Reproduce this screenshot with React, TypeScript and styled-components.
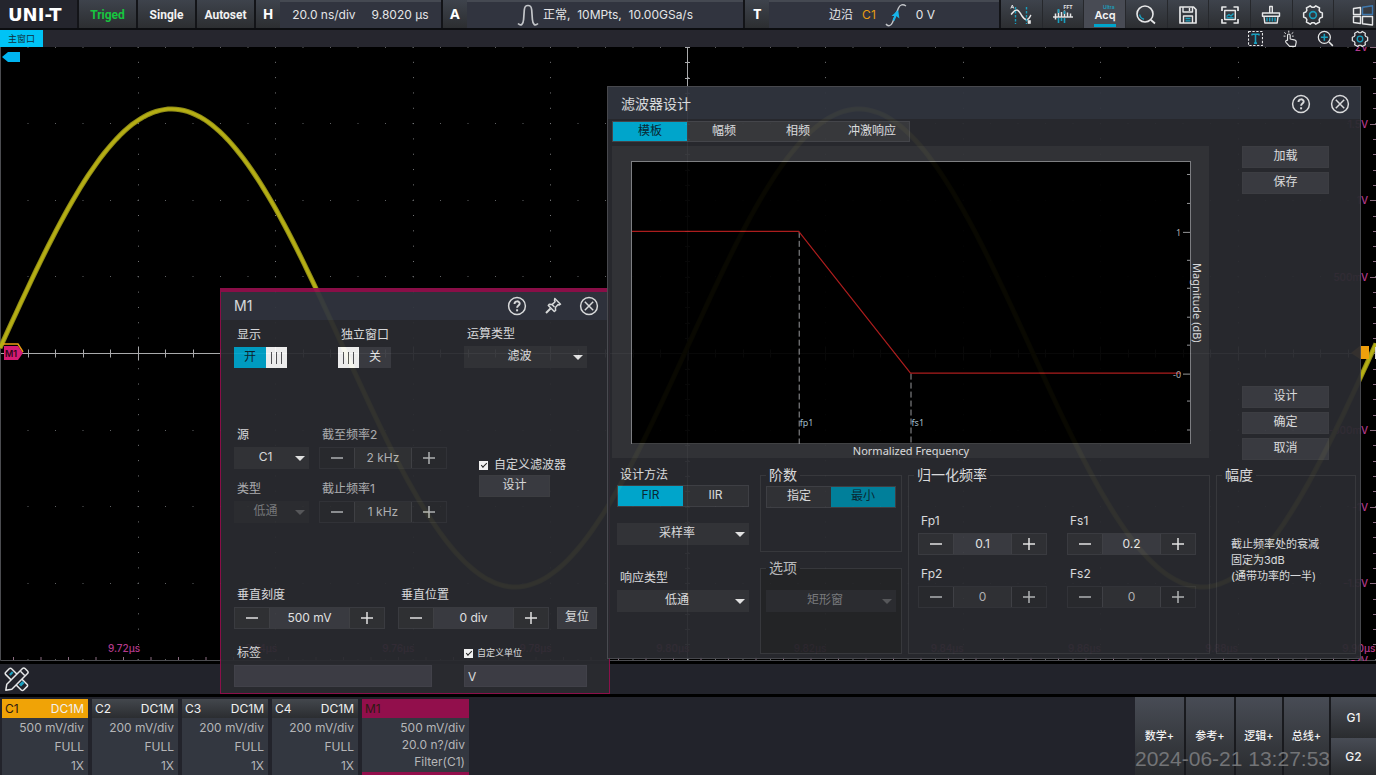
import React, { useId, useState } from "react";
import styled, { createGlobalStyle, css } from "styled-components";

const c = {
  cyan: "#00a5cc",
  cyanBright: "#00c3f5",
  magenta: "#920f4c",
  text: "#e4e5e7",
  panel: "#2a2b30",
  header: "#31353f",
  control: "#35363a",
  field: "#3d3e44",
  strip: "#22232b",
  line: "#3a3b40",
};

const barGradient = "linear-gradient(#3e434c, #2c2e31)";

const GlobalStyle = createGlobalStyle`
  *, *::before, *::after { box-sizing: border-box; }
  body {
    margin: 0;
    background: #000;
    color: ${c.text};
    font: 12px/20px Inter, "Noto Sans CJK SC", sans-serif;
    overflow: hidden;
  }
  button, input, select {
    font: inherit;
    color: inherit;
    margin: 0;
    padding: 0;
    border: 0;
    border-radius: 0;
    background: none;
    min-width: 0;
  }
`;

const Page = styled.div`
  position: relative;
  min-height: 100vh;
  display: grid;
  grid-template-rows: 30px 17px minmax(0, 1fr) 36px 78px;
`;

/* ---------- top bar ---------- */

const TopBar = styled.header`
  display: flex;
  gap: 2px;
  background: #131418;
  border-bottom: 2px solid #0c0d10;
`;

const Logo = styled.div`
  flex: 0 0 77px;
  padding-left: 8px;
  background: #24252d;
  color: #fff;
  font: 700 18px/30px "DejaVu Sans", sans-serif;
`;

const TopButton = styled.button<{ $on?: boolean }>`
  flex: 0 0 57px;
  padding-top: 1px;
  background: ${barGradient};
  color: ${(p) => (p.$on ? "#17c53f" : "#f1f1f1")};
  font-family: Roboto, sans-serif;
  font-weight: 700;
`;

const Group = styled.div<{ $grow: number }>`
  flex: ${(p) => p.$grow} 1 0;
  display: flex;
  min-width: 0;
`;

const GroupKey = styled.button`
  flex: 0 0 24px;
  background: ${barGradient};
  color: #fff;
  font-family: "Noto Sans", sans-serif;
  font-size: 14px;
  font-weight: 700;
`;

const GroupValue = styled.div<{ $end?: boolean }>`
  flex: 1;
  display: flex;
  align-items: center;
  justify-content: ${(p) => (p.$end ? "flex-end" : "center")};
  gap: ${(p) => (p.$end ? "9px" : "4px")};
  padding-right: ${(p) => (p.$end ? "64px" : "0")};
  background: #31343f;
  border-top: 2px solid #454952;
  white-space: nowrap;
`;

const Readout = styled.span`
  margin: 0 6px;
`;

const Orange = styled.span`
  color: #e79c12;
`;

const IconStrip = styled.nav`
  flex: 0 0 375px;
  display: grid;
  grid-template-columns: repeat(9, 1fr);
`;

const IconButton = styled.button<{ $active?: boolean }>`
  display: grid;
  place-items: center;
  padding-top: 1px;
  background: ${(p) => (p.$active ? "#484b54" : barGradient)};
  border-right: 1px solid #26282c;
  &:last-child { padding-left: 16px; }
`;

/* ---------- window bar ---------- */

const WindowBar = styled.div`
  display: flex;
  justify-content: space-between;
  background: #26262e;
`;

const WindowTab = styled.button`
  width: 43px;
  line-height: 16px;
  background: ${c.cyanBright};
  color: #10303c;
  font-size: 9px;
`;

const WindowTools = styled.div`
  display: flex;
  align-items: center;
  gap: 17px;
  padding-right: 7px;
  button { display: grid; width: 18px; height: 17px; place-items: center; }
`;

/* ---------- scope area ---------- */

const Scope = styled.main`
  display: grid;
  overflow: hidden;
  min-height: 0;
  svg { display: block; height: 0; min-height: 100%; }
`;

const ToolStrip = styled.div`
  background: ${c.strip};
  border: solid #000;
  border-width: 3px 0;
  padding: 3px 4px;
  button { display: block; }
`;

/* ---------- bottom bar ---------- */

const BottomBar = styled.footer`
  position: relative;
  display: flex;
  justify-content: space-between;
  background: ${c.strip};
`;

const Channels = styled.div`
  display: flex;
  gap: 4px;
  padding: 2px 2px 0;
`;

const Channel = styled.section<{ $accent?: string }>`
  flex: none;
  width: ${(p) => (p.$accent === c.magenta ? "107px" : "86px")};
  background: #333740;
  ${(p) => p.$accent === c.magenta && css`border-bottom: 3px solid ${c.magenta};`}
`;

const ChannelHead = styled.div<{ $accent?: string }>`
  display: flex;
  justify-content: space-between;
  padding: 0 4px 0 3px;
  height: 19px;
  line-height: 20px;
  background: ${(p) => p.$accent ?? "linear-gradient(#43474d, #2b2d30)"};
  color: #f0f0f0;
  span:first-child { color: ${(p) => (p.$accent ? "#2e1a12" : "#f0f0f0")}; }
`;

const ChannelLine = styled.div<{ $tight?: boolean }>`
  height: ${(p) => (p.$tight ? "17px" : "19px")};
  line-height: 20px;
  padding-right: 4px;
  text-align: right;
  color: #b5b6b8;
`;

const AddButtons = styled.div`
  display: grid;
  grid-template-columns: 49px 48px 46px 45px 45px;
  grid-template-rows: 41px 1fr;
  gap: 0 2px;
  background: #191a1e;
`;

const AddButton = styled.button<{ $tall?: boolean }>`
  grid-row: ${(p) => (p.$tall ? "1 / 3" : "auto")};
  background: linear-gradient(#484c55, #2a2c2f);
  color: #f1f1f1;
  font-size: ${(p) => (p.$tall ? "11px" : "12px")};
  font-weight: 500;
`;

const Stamp = styled.time`
  position: absolute;
  right: 46px;
  bottom: 4px;
  font: 21px/24px "Liberation Sans", sans-serif;
  color: #737477;
  pointer-events: none;
`;

/* ---------- shared dialog parts ---------- */

const Title = styled.h2`
  flex: 1;
  margin: 0;
  font-size: 14px;
  font-weight: 400;
`;

const DialogHead = styled.div<{ $height: number }>`
  display: flex;
  align-items: center;
  height: ${(p) => p.$height}px;
  background: ${c.header};
  button { display: grid; place-items: center; }
`;

const Label = styled.label<{ $dim?: boolean }>`
  padding-left: 3px;
  height: 20px;
  white-space: nowrap;
  opacity: ${(p) => (p.$dim ? 0.75 : 1)};
`;

const Field = styled.div<{ $width?: number }>`
  display: flex;
  flex-direction: column;
  gap: 2px;
  flex: none;
  width: ${(p) => (p.$width ? `${p.$width}px` : "auto")};
`;

const PlainButton = styled.button`
  height: 22px;
  background: ${c.field};
  line-height: 18px;
  padding-bottom: 2px;
  border: 1px solid #404146;
  white-space: nowrap;
`;

const SelectBox = styled.div<{ $dim?: boolean }>`
  position: relative;
  height: 22px;
  background: ${(p) => (p.$dim ? "#2e2f33" : "#35363a")};
  color: ${(p) => (p.$dim ? "#7f8083" : c.text)};
  select {
    appearance: none;
    width: 100%;
    height: 22px;
    padding: 0 24px 2px 12px;
    text-align-last: center;
    opacity: 1;
  }
  &::after {
    content: "";
    position: absolute;
    right: 4px;
    top: 9px;
    border: 5px solid transparent;
    border-top-color: ${(p) => (p.$dim ? "#5b5c5f" : "#eeeeee")};
    border-bottom: 0;
    pointer-events: none;
  }
`;

const StepperBox = styled.div<{ $dim?: boolean }>`
  display: grid;
  grid-template-columns: 34px 1fr 34px;
  height: 22px;
  border: 1px solid ${(p) => (p.$dim ? "#35363b" : "#3e3f44")};
  background: ${(p) => (p.$dim ? "#2b2c30" : "#323337")};
  color: ${(p) => (p.$dim ? "#b9babc" : "#efeff0")};
  button { display: grid; place-items: center; }
  input {
    width: 100%;
    text-align: center;
    background: ${(p) => (p.$dim ? "#323337" : c.field)};
    border: solid #434449;
    border-width: 0 1px;
  }
`;

const SwitchBox = styled.label<{ $on: boolean }>`
  position: relative;
  display: flex;
  flex-direction: ${(p) => (p.$on ? "row" : "row-reverse")};
  width: 53px;
  height: 21px;
  input { position: absolute; inset: 0; opacity: 0; }
`;

const SwitchText = styled.span<{ $on: boolean }>`
  flex: 1;
  text-align: center;
  background: ${(p) => (p.$on ? c.cyan : c.field)};
  color: ${(p) => (p.$on ? "#0c2530" : "#f0f0f0")};
`;

const Knob = styled.span`
  flex: 0 0 21px;
  display: flex;
  justify-content: center;
  align-items: center;
  gap: 4px;
  background: #fbfbfb;
  &::before, &::after, i { content: ""; width: 1px; height: 12px; background: #55565a; }
`;

const Tick = styled.label<{ $small?: boolean }>`
  display: flex;
  align-items: center;
  gap: ${(p) => (p.$small ? "4px" : "6px")};
  height: 20px;
  font-size: ${(p) => (p.$small ? "9px" : "12px")};
  white-space: nowrap;
  input {
    flex: none;
    appearance: none;
    width: 9px;
    height: 9px;
    background: #fff;
    display: grid;
    place-items: center;
  }
  input:checked::before {
    content: "";
    width: 6px;
    height: 3px;
    margin-bottom: 2px;
    border: solid #222;
    border-width: 0 0 1px 1px;
    transform: rotate(-45deg);
  }
`;

const TextInput = styled.input`
  height: 22px;
  background: #3e3e46;
  border: 1px solid #43434b;
  padding: 0 3px;
`;

const Segments = styled.div`
  display: grid;
  grid-auto-flow: column;
  grid-auto-columns: 1fr;
  height: 22px;
  border: 1px solid #424348;
  background: #333438;
`;

const Segment = styled.button<{ $on?: boolean; $muted?: boolean }>`
  line-height: 18px;
  padding-bottom: 2px;
  background: ${(p) => (p.$on ? (p.$muted ? "#0286a3" : "#00aed6") : "transparent")};
  color: ${(p) => (p.$on ? "#0b2a36" : c.text)};
`;

/* ---------- M1 dialog ---------- */

const MathDialog = styled.section`
  position: absolute;
  left: 220px;
  bottom: 81px;
  width: 390px;
  border: 1px solid ${c.magenta};
  border-top-width: 4px;
  background: ${c.panel};
  opacity: 0.94;
`;

const MathHead = styled(DialogHead)`
  gap: 17px;
  padding: 0 10px 0 13px;
`;

const MathBody = styled.div`
  display: flex;
  flex-direction: column;
  padding: 4px 10px 6px 13px;
`;

const Row = styled.div<{ $top?: number; $gap?: number }>`
  display: flex;
  align-items: flex-end;
  gap: ${(p) => p.$gap ?? 10}px;
  margin-top: ${(p) => p.$top ?? 0}px;
`;

const VerticalRow = styled.div`
  display: grid;
  grid-template-columns: 156px 151px 40px;
  gap: 8px;
  align-items: end;
  margin-top: 62px;
`;

const BottomRow = styled.div`
  display: flex;
  justify-content: space-between;
  margin-top: 14px;
  padding-right: 12px;
`;

const FilterRow = styled.div`
  display: flex;
  align-items: center;
  margin-top: 57px;
  gap: 32px;
`;

const CustomFilter = styled.div`
  display: flex;
  flex-direction: column;
  width: 88px;
  padding-top: 4px;
  ${PlainButton} { width: 71px; }
`;

/* ---------- filter design dialog ---------- */

const FilterDialog = styled.section`
  position: absolute;
  right: 15px;
  top: 86px;
  width: 754px;
  border: 1px solid #4b4c52;
  background: ${c.panel};
  opacity: 0.95;
`;

const FilterHead = styled(DialogHead)`
  gap: 19px;
  padding: 2px 10px 0 13px;
`;

const Tabs = styled.div`
  display: grid;
  grid-template-columns: repeat(4, 1fr);
  width: 298px;
  margin: 2px 0 4px 4px;
  height: 21px;
  border: 1px solid #48494e;
  background: #3a3b3f;
  button { line-height: 17px; }
`;

const Upper = styled.div`
  display: flex;
  padding-left: 4px;
`;

const ChartPanel = styled.div`
  flex: 0 0 597px;
  display: grid;
  grid-template-columns: 19px 1fr 18px;
  grid-template-rows: 15px auto 14px;
  background: #343539;
  font-family: "Noto Sans", sans-serif;
  font-size: 11px;
`;

const Chart = styled.svg`
  grid-area: 2 / 2;
  width: 100%;
  display: block;
  background: #000;
`;

const XTitle = styled.div`
  grid-area: 3 / 2;
  line-height: 13px;
  text-align: center;
`;

const YTitle = styled.div`
  grid-area: 2 / 3;
  line-height: 12px;
  writing-mode: vertical-rl;
  text-align: center;
  width: 12px;
`;

const Actions = styled.div`
  flex: none;
  display: flex;
  flex-direction: column;
  gap: 4px;
  width: 87px;
  margin: 0 0 -2px 33px;
  button:nth-child(3) { margin-top: auto; }
`;

const Lower = styled.div`
  display: flex;
  padding: 9px 4px 4px 9px;
  height: 200px;
`;

const Method = styled.div`
  display: flex;
  flex-direction: column;
  width: 132px;
  margin: -2px 11px 0 0;
`;

const MethodSelect = styled.div<{ $top: number }>`
  margin-top: ${(p) => p.$top}px;
`;

const Stack = styled.div`
  display: grid;
  grid-template-rows: 85px 1fr;
  gap: 8px;
  width: 142px;
  margin-right: 6px;
`;

const Frame = styled.fieldset<{ $width?: number; $dim?: boolean }>`
  flex: ${(p) => (p.$width ? "none" : "1")};
  width: ${(p) => (p.$width ? `${p.$width}px` : "auto")};
  min-width: 0;
  margin: 0 6px 0 0;
  padding: 0 5px;
  border: 1px solid ${c.line};
  ${(p) => p.$dim && css`background: #252629; color: #c2c3c5;`}
  ${Stack} > & { margin-right: 0; }
  &:last-child { margin-right: 0; }
`;

const Legend = styled.legend`
  padding: 0 3px;
  font-size: 14px;
  line-height: 16px;
`;

const FrameControl = styled.div<{ $top: number }>`
  margin-top: ${(p) => p.$top}px;
`;

const FreqGrid = styled.div`
  display: grid;
  grid-template-columns: 129px 129px;
  gap: 9px 20px;
  padding: 28px 0 0 4px;
`;

const Note = styled.p`
  margin: 53px 0 0 9px;
  font-size: 11px;
  line-height: 16px;
  white-space: nowrap;
`;

/* ---------- icons ---------- */

const W = "#e6e7e8";
const B = "#1a9fbe";

const Icon = ({ size = 22, children }: { size?: number; children: React.ReactNode }) => (
  <svg width={size} height={size} viewBox="0 0 22 22" fill="none" stroke={W} strokeWidth={1.4} strokeLinejoin="round" aria-hidden="true">
    {children}
  </svg>
);

const gearPath = Array.from({ length: 6 }, (_, i) => i * 60)
  .flatMap((a) => [[a - 23, 7.7], [a - 13, 9.6], [a + 13, 9.6], [a + 23, 7.7]])
  .map(([a, r], i) => {
    const t = (a * Math.PI) / 180;
    return `${i ? "L" : "M"}${(11 + r * Math.cos(t)).toFixed(2)} ${(11 + r * Math.sin(t)).toFixed(2)}`;
  })
  .join(" ") + "Z";

const Gear = ({ size = 22 }: { size?: number }) => (
  <Icon size={size}>
    <path d={gearPath} strokeWidth={1.5} />
    <circle cx="11" cy="11" r="3.4" stroke={B} strokeWidth={1.6} />
  </Icon>
);

const CursorIcon = () => (
  <Icon>
    <path d="M1 10.5C2.5 9.5 4 6 6.5 6S10 9 12 12s3.500 4.500 5.500 3.500S20 12 21 11" strokeWidth={1.5} />
    <path d="M5.500 3v17M16.500 3v17" stroke={B} strokeDasharray="2.500 1.500" />
    <path d="M0.800 4.500L2.300 1l1.500 3.500M1.300 3.300h2" strokeWidth={0.9} />
    <rect x="18" y="16.500" width="2.500" height="3" fill={W} strokeWidth={0.6} />
  </Icon>
);

const FftIcon = () => (
  <Icon>
    <path d="M1 13h20" />
    <path d="M3.500 9.500v6M6.500 5.500v7.500M9.500 8v5M12.500 6.500v6.500M15.500 8.500v4.500M18.500 9.500v3.500" strokeWidth={1.5} />
    <path d="M6.500 14v5M9.500 14v3M12.500 14v5" stroke={B} strokeWidth={1.6} />
    <path d="M6.500 5v4M12.500 7v3" stroke={B} strokeWidth={1.6} />
    <text x="11.500" y="5" fontSize="5" fontWeight="700" fill={W} stroke="none">FFT</text>
  </Icon>
);

const AcqIcon = () => (
  <svg width="24" height="24" viewBox="0 0 24 24" aria-hidden="true">
    <text x="10" y="6" fontSize="5" fontWeight="600" fill={B}>Ultra</text>
    <text x="12" y="16" fontSize="11" fontWeight="600" fill="#f4f4f4" textAnchor="middle">Acq</text>
    <rect x="1" y="21" width="22" height="3" fill={c.cyan} />
  </svg>
);

const SearchIcon = () => (
  <Icon>
    <circle cx="10" cy="10" r="8" strokeWidth={1.6} />
    <path d="M16 16l4 3.500" strokeWidth={1.8} />
    <path d="M4.700 10.500A5.500 5.500 0 0 0 9 15.200" stroke={B} />
  </Icon>
);

const SaveIcon = () => (
  <Icon>
    <path d="M3 3h13.500L19 5.500V19H3z" strokeWidth={1.7} />
    <path d="M6 3v5h9.500V3M12.500 4v3" />
    <path d="M6.500 19v-7h9v7" />
    <path d="M8.500 14.500h5M8.500 16.800h5" stroke={B} strokeWidth={1.3} />
  </Icon>
);

const CaptureIcon = () => (
  <Icon>
    <path d="M3 7V3h4.500M14.500 3H19v4M19 15v4h-4.500M7.500 19H3v-4" strokeWidth={1.7} />
    <rect x="5.700" y="6.500" width="10.600" height="9" />
    <path d="M7.500 12.500l2.500-2 2 1.500 2.500-2.500" stroke={B} />
    <path d="M7.500 13.800h7" stroke={B} />
  </Icon>
);

const CleanIcon = () => (
  <Icon>
    <path d="M9.700 9V2.500h2.600V9" />
    <path d="M2.500 9h17v3.200h-17z" strokeLinejoin="round" />
    <path d="M4 12.500l.8 6.500h12.400l.8-6.500" />
    <path d="M7 13.500v4M9.700 13.500v4M12.400 13.500v4M15.100 13.500v4" stroke={B} />
  </Icon>
);

const WindowsIcon = () => (
  <Icon>
    <path d="M1.500 4.500l7-1v7h-7zM1.500 12.500h7v7l-7-1zM10.500 12.500h10V21l-10-1.300z" />
    <path d="M10.500 3.200l10-1.500v8.800h-10z" stroke="#3f78ad" />
  </Icon>
);

const TextBoxIcon = () => (
  <Icon size={17}>
    <rect x="2" y="2" width="18" height="18" strokeDasharray="3 2" />
    <path d="M6.500 7V5.500h9V7M11 5.500v11M9 17h4" stroke={B} strokeWidth={2} />
  </Icon>
);

const TouchIcon = () => (
  <Icon size={18}>
    <path d="M8 13V6.500a1.600 1.600 0 0 1 3.200 0V11l5 1c2 .5 2.800 1.500 2.300 3.500L17.500 20h-7L6 15c-1-1.500.5-3 2-2" />
    <path d="M9.500 3.200V.8M6 4.500L4 3M13 4.500L15 3M5.500 7.500H3.200M13.500 7.500h2" strokeWidth={1.2} />
  </Icon>
);

const ZoomIcon = () => (
  <Icon size={17}>
    <circle cx="9.500" cy="9.500" r="7.800" strokeWidth={1.6} />
    <path d="M15.500 15.500l5 5" strokeWidth={2} />
    <path d="M9.500 5v9M5 9.500h9" stroke={B} strokeWidth={2} />
  </Icon>
);

const PulseIcon = () => (
  <svg width="22" height="24" viewBox="0 0 22 24" fill="none" stroke="#c3c5c9" strokeWidth="1.700" aria-hidden="true">
    <path d="M1 20.500c3 3 5.200 1 5.600-4L7.300 7c.3-3.500 1-4.500 3.700-4.500s3.400 1 3.700 4.500l.7 9.500c.4 5 2.600 7 5.600 4" />
  </svg>
);

const EdgeIcon = () => (
  <svg width="22" height="24" viewBox="0 0 22 24" fill="none" stroke="#c3c5c9" strokeWidth="1.400" aria-hidden="true">
    <path d="M1 21c2 3 5 2 6.500-1.500L13.500 5c1.500-3.500 4.500-4 7.500-2" />
    <path d="M8.500 17.500L12 9" stroke="#16b4ea" strokeWidth="2" />
    <path d="M6.500 13l6.700-6 1.200 8.500-3.200-2.500z" fill="#16b4ea" stroke="none" />
  </svg>
);

const HelpIcon = () => (
  <svg width="20" height="20" viewBox="0 0 20 20" fill="none" stroke={W} strokeWidth="1.500" aria-hidden="true">
    <circle cx="10" cy="10" r="8.400" />
    <path d="M7.500 8c0-3.600 5.200-3.400 5.200-.4 0 2-2.600 2-2.600 4.200" strokeWidth="1.900" />
    <path d="M10.100 13.300v2" strokeWidth="2" />
  </svg>
);

const CloseIcon = () => (
  <svg width="20" height="20" viewBox="0 0 20 20" fill="none" stroke={W} strokeWidth="1.500" aria-hidden="true">
    <circle cx="10" cy="10" r="8.400" />
    <path d="M5.800 5.800l8.400 8.400M14.200 5.800l-8.400 8.400" />
  </svg>
);

const PinIcon = () => (
  <svg width="18" height="18" viewBox="0 0 18 18" fill="none" stroke={W} strokeWidth="1.500" strokeLinejoin="round" aria-hidden="true">
    <path d="M10.800 1.500l5.700 5.700-1.500.8-.9-.4-2.700 2.900.2 3-1.300 1-6-6 1-1.300 3 .2 2.800-2.700-.6-1.200z" />
    <path d="M6.500 11.500L2 16" strokeWidth="2" />
    <path d="M8 7.500l2.500 2.500" />
  </svg>
);

const DrawIcon = () => (
  <svg width="25" height="25" viewBox="0 0 25 25" fill="none" stroke={W} strokeWidth="1.500" strokeLinejoin="round" aria-hidden="true">
    <path d="M1.800 5.200l3.400-3.400c.8-.8 1.700-.8 2.400 0L23 17.200c.8.8.8 1.600 0 2.400l-3.400 3.400c-.8.8-1.600.8-2.400 0L1.800 7.600c-.8-.8-.8-1.600 0-2.400z" />
    <path d="M5.800 8l3-3" stroke={B} strokeWidth="2.200" />
    <path d="M16 18.500l3.500-3.500" stroke={B} strokeWidth="3" />
    <path d="M1.800 23.200l1-6L18.500 1.500c.8-.8 1.700-.8 2.500 0l2.500 2.500c.8.800.8 1.700 0 2.500L7.800 22.200z" fill={c.strip} />
    <path d="M16.500 4.300l4.200 4.200" />
  </svg>
);

const Minus = () => (
  <svg width="12" height="12" viewBox="0 0 12 12" stroke="currentColor" strokeWidth="1.500" aria-hidden="true"><path d="M0 6h12" /></svg>
);
const Plus = () => (
  <svg width="12" height="12" viewBox="0 0 12 12" stroke="currentColor" strokeWidth="1.500" aria-hidden="true"><path d="M0 6h12M6 0v12" /></svg>
);

/* ---------- controls ---------- */

function Stepper({ label, value, width, dim, dimLabel }: { label: string; value: string; width: number; dim?: boolean; dimLabel?: boolean }) {
  const id = useId();
  return (
    <Field $width={width}>
      <Label htmlFor={id} $dim={dimLabel}>{label}</Label>
      <StepperBox $dim={dim}>
        <button aria-label={`${label} −`}><Minus /></button>
        <input id={id} defaultValue={value} />
        <button aria-label={`${label} +`}><Plus /></button>
      </StepperBox>
    </Field>
  );
}

function Select({ id, name, value, dim }: { id?: string; name?: string; value: string; dim?: boolean }) {
  return (
    <SelectBox $dim={dim}>
      <select id={id} aria-label={name} disabled={dim} defaultValue={value}>
        <option>{value}</option>
      </select>
    </SelectBox>
  );
}

function SelectField({ label, value, width, dim }: { label: string; value: string; width: number; dim?: boolean }) {
  const id = useId();
  return (
    <Field $width={width}>
      <Label htmlFor={id} $dim={dim}>{label}</Label>
      <Select id={id} value={value} dim={dim} />
    </Field>
  );
}

function Switch({ label, initial, width }: { label: string; initial: boolean; width: number }) {
  const id = useId();
  const [on, setOn] = useState(initial);
  return (
    <Field $width={width}>
      <Label htmlFor={id}>{label}</Label>
      <SwitchBox $on={on}>
        <input id={id} type="checkbox" checked={on} onChange={() => setOn(!on)} />
        <SwitchText $on={on}>{on ? "开" : "关"}</SwitchText>
        <Knob><i /></Knob>
      </SwitchBox>
    </Field>
  );
}

/* ---------- scope drawing ---------- */

const COL = 137.5;
const ROW = 76.6;
const CENTER = 306;

const wave = Array.from({ length: 345 }, (_, i) => {
  const x = i * 4;
  const y = 301 - 239 * Math.sin((2 * Math.PI * x) / 687);
  return `${i ? "L" : "M"}${x} ${y.toFixed(1)}`;
}).join("");

const volts = ["2V", "1.5V", "1V", "500mV", "", "-500mV", "-1V", "-1.5V", "-2V"];
const times = ["9.72", "9.74", "9.76", "9.78", "9.80", "9.82", "9.84", "9.86", "9.88", "9.90"];

function ScopeDrawing() {
  const rows = Array.from({ length: 9 }, (_, i) => CENTER + (i - 4) * ROW);
  const cols = Array.from({ length: 9 }, (_, i) => (i + 1) * COL);
  return (
    <svg width="100%" viewBox="0 0 1376 614" preserveAspectRatio="xMinYMin slice">
      <g stroke="#77787a" strokeWidth="1">
        {cols.map((x) => (
          <line key={x} x1={Math.round(x) + 0.5} x2={Math.round(x) + 0.5} y1={-0.5} y2="613" strokeDasharray="1 14.32" />
        ))}
        {rows.map((y) => (
          <line key={y} x1="0" x2="1376" y1={Math.round(y) + 0.5} y2={Math.round(y) + 0.5} strokeDasharray="1 26.5" strokeOpacity="0.8" />
        ))}
      </g>
      <path d="M687.500 0V613M0 306.500H1376" stroke="#a9aaac" />
      <g stroke="#a9aaac">
        {Array.from({ length: 49 }, (_, i) => (i + 1) * 27.5).map((x, i) => {
          const h = (i + 1) % 5 === 0 ? 7 : 4;
          return <line key={x} x1={Math.round(x) + 0.5} x2={Math.round(x) + 0.5} y1={306.5 - h} y2={306.5 + h} />;
        })}
        {Array.from({ length: 40 }, (_, i) => i * 15.32).map((y) => (
          <line key={y} x1="685" x2="690" y1={Math.round(y) + 0.5} y2={Math.round(y) + 0.5} />
        ))}
      </g>
      <path d="M0.500 0V613.500H1376" stroke="#4b4c50" fill="none" />
      <g stroke="#8a6c80">
        {Array.from({ length: 50 }, (_, i) => 13.5 + i * 27.5).map((x) => (
          <line key={x} x1={x} x2={x} y1="610" y2="613" />
        ))}
        {Array.from({ length: 40 }, (_, i) => i * 15.32).map((y, i) => (
          <line key={y} x1={i % 5 ? 1373 : 1370} x2="1376" y1={Math.round(y) + 0.5} y2={Math.round(y) + 0.5} />
        ))}
      </g>
      <g fill="#b43a8c" fontSize="10" fontWeight="500">
        {times.map((t, i) => (
          <text key={t} x={124 + i * 137.2} y="605" textAnchor="middle" letterSpacing="0">{t}µs</text>
        ))}
        {volts.map((v, i) => (
          <text key={i} x="1368" y={4 + i * ROW} textAnchor="end">{v}</text>
        ))}
      </g>
      <path d={wave} fill="none" stroke="#8f8b16" strokeWidth="5" />
      <path d={wave} fill="none" stroke="#b5ae14" strokeWidth="3" />
      <path d="M3 297H18L23 305" fill="none" stroke="#e79c12" strokeWidth="1.500" />
      <path d="M4 299h14l5 7-5 7H4z" fill="#d51c74" />
      <text x="5" y="309.500" fontSize="9" fontWeight="600" fill="#2c0717">M1</text>
      <path d="M2 10l6-5h12v10H8z" fill="#00b4f0" />
      <path d="M1351 306l9-7h9v13h-9z" fill="#f0a00c" />
      <path d="M1375.500 300v12" stroke="#d8d8d8" strokeWidth="1" />
    </svg>
  );
}

function FilterChart() {
  const ticks = [13, 42, 71, 99, 127, 156, 184, 213, 240, 269];
  return (
    <Chart viewBox="0 0 561 284" role="img" aria-label="Magnitude (dB) / Normalized Frequency">
      <rect x="0.500" y="0.500" width="560" height="283" fill="none" stroke="#85868a" />
      <g stroke="#a0a1a4">
        {ticks.map((y) => (
          <line key={y} x1={y === 71 || y === 213 ? 553 : 557} x2="560" y1={y + 0.5} y2={y + 0.5} />
        ))}
        <path d="M168.500 71V284M280.500 213V284" strokeDasharray="6 3" fill="none" />
      </g>
      <path d="M1 70.500H168L280 212.500H551" fill="none" stroke="#b51f1f" strokeWidth="1.200" />
      <g fontSize="9" fill="#a9c3d4">
        <text x="169" y="265">fp1</text>
        <text x="281" y="265">fs1</text>
      </g>
      <g fontSize="9" fill="#b9babc">
        <text x="546" y="75">1</text>
        <text x="543" y="217">-0</text>
      </g>
    </Chart>
  );
}

/* ---------- dialogs ---------- */

function MathWindow() {
  const labelId = useId();
  return (
    <MathDialog role="dialog" aria-label="M1">
      <MathHead $height={28}>
        <Title>M1</Title>
        <button aria-label="帮助"><HelpIcon /></button>
        <button aria-label="固定"><PinIcon /></button>
        <button aria-label="关闭"><CloseIcon /></button>
      </MathHead>
      <MathBody>
        <Row $gap={0}>
          <Switch label="显示" initial width={104} />
          <Switch label="独立窗口" initial={false} width={126} />
          <SelectField label="运算类型" value="滤波" width={123} />
        </Row>
        <FilterRow>
          <div>
            <Row>
              <SelectField label="源" value="C1" width={75} />
              <Stepper label="截至频率2" value="2 kHz" width={128} dim dimLabel />
            </Row>
            <Row $top={10}>
              <SelectField label="类型" value="低通" width={75} dim />
              <Stepper label="截止频率1" value="1 kHz" width={128} dim dimLabel />
            </Row>
          </div>
          <CustomFilter>
            <Tick><input type="checkbox" defaultChecked />自定义滤波器</Tick>
            <PlainButton>设计</PlainButton>
          </CustomFilter>
        </FilterRow>
        <VerticalRow>
          <Stepper label="垂直刻度" value="500 mV" width={151} />
          <Stepper label="垂直位置" value="0 div" width={151} />
          <PlainButton>复位</PlainButton>
        </VerticalRow>
        <BottomRow>
          <Field $width={198}>
            <Label htmlFor={labelId}>标签</Label>
            <TextInput id={labelId} />
          </Field>
          <Field $width={123}>
            <Tick $small><input type="checkbox" defaultChecked />自定义单位</Tick>
            <TextInput aria-label="自定义单位" defaultValue="V" />
          </Field>
        </BottomRow>
      </MathBody>
    </MathDialog>
  );
}

function FilterWindow() {
  const [tab, setTab] = useState("模板");
  return (
    <FilterDialog role="dialog" aria-label="滤波器设计">
      <FilterHead $height={32}>
        <Title>滤波器设计</Title>
        <button aria-label="帮助"><HelpIcon /></button>
        <button aria-label="关闭"><CloseIcon /></button>
      </FilterHead>
      <Tabs role="tablist">
        {["模板", "幅频", "相频", "冲激响应"].map((t) => (
          <Segment key={t} role="tab" aria-selected={t === tab} $on={t === tab} onClick={() => setTab(t)}>{t}</Segment>
        ))}
      </Tabs>
      <Upper>
        <ChartPanel>
          <FilterChart />
          <XTitle>Normalized Frequency</XTitle>
          <YTitle>Magnitude (dB)</YTitle>
        </ChartPanel>
        <Actions>
          {["加载", "保存", "设计", "确定", "取消"].map((t) => <PlainButton key={t}>{t}</PlainButton>)}
        </Actions>
      </Upper>
      <Lower>
        <Method>
          <Label as="span">设计方法</Label>
          <Segments>
            <Segment $on aria-pressed="true">FIR</Segment>
            <Segment aria-pressed="false">IIR</Segment>
          </Segments>
          <MethodSelect $top={16}><Select name="设计参数" value="采样率" /></MethodSelect>
          <MethodSelect $top={23}><SelectField label="响应类型" value="低通" width={132} /></MethodSelect>
        </Method>
        <Stack>
          <Frame>
            <Legend>阶数</Legend>
            <FrameControl $top={3}>
              <Segments>
                <Segment aria-pressed="false">指定</Segment>
                <Segment $on $muted aria-pressed="true">最小</Segment>
              </Segments>
            </FrameControl>
          </Frame>
          <Frame $dim>
            <Legend>选项</Legend>
            <FrameControl $top={14}><Select name="选项" value="矩形窗" dim /></FrameControl>
          </Frame>
        </Stack>
        <Frame $width={302}>
          <Legend>归一化频率</Legend>
          <FreqGrid>
            <Stepper label="Fp1" value="0.1" width={129} />
            <Stepper label="Fs1" value="0.2" width={129} />
            <Stepper label="Fp2" value="0" width={129} dim />
            <Stepper label="Fs2" value="0" width={129} dim />
          </FreqGrid>
        </Frame>
        <Frame>
          <Legend>幅度</Legend>
          <Note>截止频率处的衰减<br />固定为3dB<br />(通带功率的一半)</Note>
        </Frame>
      </Lower>
    </FilterDialog>
  );
}

/* ---------- page ---------- */

const channels = [
  { name: "C1", mode: "DC1M", lines: ["500 mV/div", "FULL", "1X"], accent: "#f0a306" },
  { name: "C2", mode: "DC1M", lines: ["200 mV/div", "FULL", "1X"] },
  { name: "C3", mode: "DC1M", lines: ["200 mV/div", "FULL", "1X"] },
  { name: "C4", mode: "DC1M", lines: ["200 mV/div", "FULL", "1X"] },
  { name: "M1", mode: "", lines: ["500 mV/div", "20.0 n?/div", "Filter(C1)"], accent: c.magenta },
];

export default function App() {
  return (
    <Page>
      <GlobalStyle />
      <TopBar>
        <Logo>UNI-T</Logo>
        <TopButton $on>Triged</TopButton>
        <TopButton>Single</TopButton>
        <TopButton>Autoset</TopButton>
        <Group $grow={185}>
          <GroupKey>H</GroupKey>
          <GroupValue><Readout>20.0 ns/div</Readout><Readout>9.8020 µs</Readout></GroupValue>
        </Group>
        <Group $grow={301}>
          <GroupKey>A</GroupKey>
          <GroupValue><PulseIcon />正常, &nbsp;10MPts, &nbsp;10.00GSa/s</GroupValue>
        </Group>
        <Group $grow={254}>
          <GroupKey>T</GroupKey>
          <GroupValue $end><span>边沿</span><Orange>C1</Orange><EdgeIcon /><span>0 V</span></GroupValue>
        </Group>
        <IconStrip>
          <IconButton aria-label="光标"><CursorIcon /></IconButton>
          <IconButton aria-label="FFT"><FftIcon /></IconButton>
          <IconButton $active aria-label="Ultra Acq"><AcqIcon /></IconButton>
          <IconButton aria-label="搜索"><SearchIcon /></IconButton>
          <IconButton aria-label="保存"><SaveIcon /></IconButton>
          <IconButton aria-label="截图"><CaptureIcon /></IconButton>
          <IconButton aria-label="清除"><CleanIcon /></IconButton>
          <IconButton aria-label="设置"><Gear /></IconButton>
          <IconButton aria-label="系统"><WindowsIcon /></IconButton>
        </IconStrip>
      </TopBar>
      <WindowBar>
        <WindowTab>主窗口</WindowTab>
        <WindowTools>
          <button aria-label="文本"><TextBoxIcon /></button>
          <button aria-label="触控"><TouchIcon /></button>
          <button aria-label="放大"><ZoomIcon /></button>
          <button aria-label="窗口设置"><Gear size={18} /></button>
        </WindowTools>
      </WindowBar>
      <Scope><ScopeDrawing /></Scope>
      <ToolStrip><button aria-label="绘图"><DrawIcon /></button></ToolStrip>
      <BottomBar>
        <Channels>
          {channels.map((ch) => (
            <Channel key={ch.name} $accent={ch.accent}>
              <ChannelHead $accent={ch.accent}><span>{ch.name}</span><span>{ch.mode}</span></ChannelHead>
              {ch.lines.map((l) => <ChannelLine key={l} $tight={ch.name === "M1"}>{l}</ChannelLine>)}
            </Channel>
          ))}
        </Channels>
        <AddButtons>
          <AddButton $tall>数学+</AddButton>
          <AddButton $tall>参考+</AddButton>
          <AddButton $tall>逻辑+</AddButton>
          <AddButton $tall>总线+</AddButton>
          <AddButton>G1</AddButton>
          <AddButton>G2</AddButton>
        </AddButtons>
        <Stamp>2024-06-21 13:27:53</Stamp>
      </BottomBar>
      <MathWindow />
      <FilterWindow />
    </Page>
  );
}
